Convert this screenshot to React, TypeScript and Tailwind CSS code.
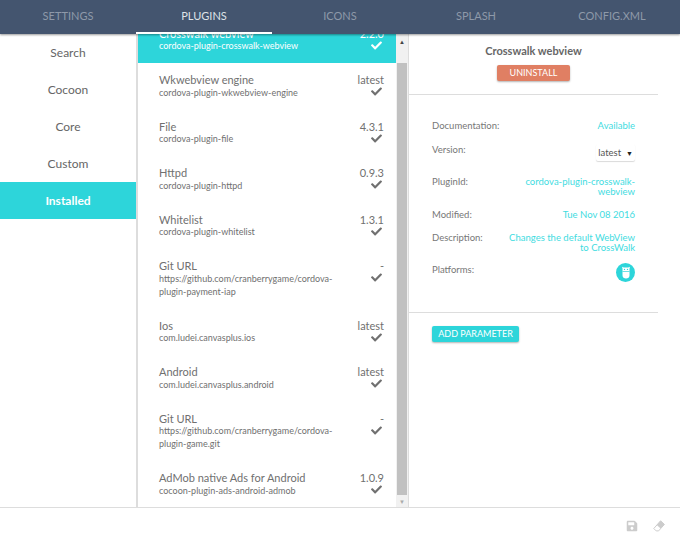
import type { ReactNode } from "react";
import { FaCheck, FaSave } from "react-icons/fa";

const font = { fontFamily: '"Lato", "Noto Sans", sans-serif' };

const tabs = ["SETTINGS", "PLUGINS", "ICONS", "SPLASH", "CONFIG.XML"];
const categories = ["Search", "Cocoon", "Core", "Custom", "Installed"];

const plugins = [
  { name: "Crosswalk webview", id: "cordova-plugin-crosswalk-webview", version: "2.2.0", active: true },
  { name: "Wkwebview engine", id: "cordova-plugin-wkwebview-engine", version: "latest" },
  { name: "File", id: "cordova-plugin-file", version: "4.3.1" },
  { name: "Httpd", id: "cordova-plugin-httpd", version: "0.9.3" },
  { name: "Whitelist", id: "cordova-plugin-whitelist", version: "1.3.1" },
  { name: "Git URL", id: "https://github.com/cranberrygame/cordova-plugin-payment-iap", version: "-" },
  { name: "Ios", id: "com.ludei.canvasplus.ios", version: "latest" },
  { name: "Android", id: "com.ludei.canvasplus.android", version: "latest" },
  { name: "Git URL", id: "https://github.com/cranberrygame/cordova-plugin-game.git", version: "-" },
  { name: "AdMob native Ads for Android", id: "cocoon-plugin-ads-android-admob", version: "1.0.9" },
];

function PluginRow({ name, id, version, active }: { name: string; id: string; version: string; active?: boolean }) {
  return (
    <div className={`flex justify-between pl-[22px] pr-[12px] pt-[10px] pb-[11px] ${active ? "bg-[#2dd5da] text-white" : "text-[#707070]"}`}>
      <div className="w-[186px]">
        <div className="text-[11px] leading-[14px]">{name}</div>
        <div className="text-[9px] leading-[13px] -mt-[1.5px] break-words">{id}</div>
      </div>
      <div className="flex flex-col items-end">
        <div className="text-[11px] leading-[14px]">{version}</div>
        <FaCheck className="text-[11px] -mt-[1px] mr-[2px]" />
      </div>
    </div>
  );
}

function Detail({ label, children, className }: { label: string; children: ReactNode; className?: string }) {
  return (
    <div className={`flex justify-between items-start ${className ?? ""}`}>
      <span className="text-[9.5px] leading-[13px] text-[#777]">{label}</span>
      <div className="pt-[2px] text-[9.5px] leading-[10px] text-[#3fdcdf] text-right w-[132px]">{children}</div>
    </div>
  );
}

export default function App() {
  return (
    <div style={font} className="w-[680px] h-[542px] flex flex-col bg-white overflow-hidden">
      <div className="h-[34px] shrink-0 bg-[#44556f] flex shadow-[0_1px_2px_rgba(0,0,0,0.4)] z-10">
        {tabs.map((tab) => (
          <div
            key={tab}
            className={`w-[136px] flex items-center justify-center text-[11px] ${tab === "PLUGINS" ? "text-[#dfe3e8] border-b-2 border-white" : "text-[#8e99a9] pb-[2px]"}`}
          >
            {tab}
          </div>
        ))}
      </div>

      <div className="flex-1 flex min-h-0">
        <div className="w-[136px] shrink-0 flex flex-col">
          {categories.map((cat) => (
            <div
              key={cat}
              className={`h-[37px] shrink-0 flex items-center justify-center text-[12px] ${cat === "Installed" ? "bg-[#2dd5da] text-white font-bold" : "text-[#666]"}`}
            >
              {cat}
            </div>
          ))}
        </div>

        <div className="w-[273px] shrink-0 flex border-l-2 border-[#ddd] border-r overflow-hidden">
          <div className="flex-1 min-w-0 overflow-hidden">
            <div className="-mt-[17.5px] -ml-px">
              {plugins.map((p, i) => (
                <PluginRow key={i} {...p} />
              ))}
            </div>
          </div>
          <div className="w-[12px] shrink-0 bg-[#f1f1f1] flex flex-col items-center">
            <div className="h-[29px] pt-[3px] flex items-start justify-center text-[6px] text-[#444]">▲</div>
            <div className="w-[10px] flex-1 bg-[#c1c1c1]" />
            <div className="h-[12px] flex items-center justify-center text-[6px] text-[#aaa]">▼</div>
          </div>
        </div>

        <div className="flex-1 min-w-0 flex flex-col">
          <div className="w-[249px] h-[61px] shrink-0 flex flex-col items-center pt-[10px] border-b border-[#ddd]">
            <div className="text-[11px] font-bold text-[#666] leading-[14px]">Crosswalk webview</div>
            <button className="mt-[7px] w-[73px] h-[16px] rounded-[2px] bg-[#e07f63] text-white text-[9px] shadow-[0_1px_2px_rgba(0,0,0,0.3)]">
              UNINSTALL
            </button>
          </div>

          <div className="w-[249px] h-[218px] shrink-0 pl-[23px] pr-[23px] pt-[24px] border-b border-[#ddd] flex flex-col">
            <Detail label="Documentation:">Available</Detail>
            <Detail label="Version:" className="mt-[11px]">
              <span className="inline-flex items-center gap-[5px] text-[#555] h-[17px] px-[2px] rounded-[2px] shadow-[0_1px_1px_rgba(0,0,0,0.15)] -mt-[1px]">
                latest <span className="text-[7px] text-[#222]">▼</span>
              </span>
            </Detail>
            <Detail label="PluginId:" className="mt-[13.5px]">
              cordova-plugin-crosswalk-webview
            </Detail>
            <Detail label="Modified:" className="mt-[11px]">Tue Nov 08 2016</Detail>
            <Detail label="Description:" className="mt-[10px]">
              Changes the default WebView to CrossWalk
            </Detail>
            <Detail label="Platforms:" className="mt-[10px]">
              <div className="flex justify-end -mt-[2px]">
                <div className="w-[19px] h-[19px] rounded-full bg-[#2dd5da] flex items-center justify-center">
                  <svg width="10" height="13" viewBox="0 0 10 13" fill="#fff">
                    <path d="M1.5 2.5 1 0.8 2.8 1.6H7.2L9 0.8 8.5 2.5V9.5C8.5 11.5 7 12.5 5 12.5S1.5 11.5 1.5 9.5Z" />
                    <circle cx="3.5" cy="3.4" r="0.7" fill="#2dd5da" />
                    <circle cx="6.5" cy="3.4" r="0.7" fill="#2dd5da" />
                    <rect x="1.5" y="5" width="7" height="0.7" fill="#2dd5da" />
                  </svg>
                </div>
              </div>
            </Detail>
          </div>

          <div className="flex pl-[23px] pt-[13px]">
            <button className="w-[87px] h-[16px] rounded-[2px] bg-[#2dd5da] text-white text-[9px] shadow-[0_1px_2px_rgba(0,0,0,0.3)]">
              ADD PARAMETER
            </button>
          </div>
        </div>
      </div>

      <div className="h-[35px] shrink-0 border-t border-[#ddd] bg-white flex items-center justify-end gap-[15px] pr-[15px] pt-[1px] text-[#ccc] text-[12px]">
        <FaSave />
        <svg width="12" height="12" viewBox="0 0 12 12">
          <path d="M7.6 0.8 11.4 4.4 5.6 10.9H3.2L0.8 8.5Z" fill="none" stroke="#ccc" strokeWidth="1" />
          <path d="M7.6 0.8 11.4 4.4 7.6 8.6 3.8 5Z" fill="#ccc" />
        </svg>
      </div>
    </div>
  );
}
